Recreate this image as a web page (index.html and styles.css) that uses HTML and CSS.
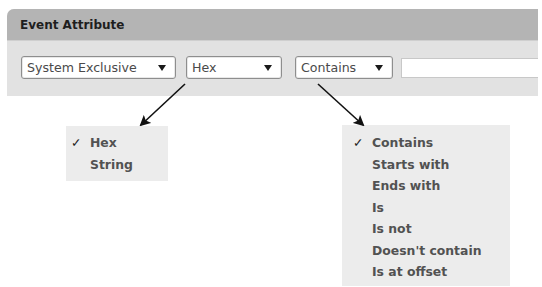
FILE: index.html
```html
<!DOCTYPE html>
<html>
<head>
<meta charset="utf-8">
<link rel="stylesheet" href="styles.css">
</head>
<body>
<div class="page">
  <div class="panel">
    <div class="panel-head">Event Attribute</div>
    <div class="panel-body">
      <div class="select sel-type"><span>System Exclusive</span><span class="tri"></span></div>
      <div class="select sel-format"><span>Hex</span><span class="tri"></span></div>
      <div class="select sel-op"><span>Contains</span><span class="tri"></span></div>
      <div class="field"></div>
    </div>
  </div>
  <div class="menus">
    <ul class="menu menu-format">
      <li class="checked">Hex</li>
      <li>String</li>
    </ul>
    <ul class="menu menu-op">
      <li class="checked">Contains</li>
      <li>Starts with</li>
      <li>Ends with</li>
      <li>Is</li>
      <li>Is not</li>
      <li>Doesn't contain</li>
      <li>Is at offset</li>
    </ul>
  </div>
  <svg class="arrows" width="542" height="287" viewBox="0 0 542 287">
    <defs>
      <marker id="ah" markerWidth="11" markerHeight="11" refX="9" refY="5.5" orient="auto" markerUnits="userSpaceOnUse">
        <path d="M0,0 L11,5.5 L0,11 L2.5,5.5 Z" fill="#111"/>
      </marker>
    </defs>
    <line x1="185" y1="84" x2="141" y2="125" stroke="#111" stroke-width="1.6" marker-end="url(#ah)"/>
    <line x1="318" y1="84" x2="363" y2="125" stroke="#111" stroke-width="1.6" marker-end="url(#ah)"/>
  </svg>
</div>
</body>
</html>
```
FILE: styles.css
```css
html, body {
  margin: 0;
  padding: 0;
  background: #ffffff;
}
.page {
  position: relative;
  width: 542px;
  height: 287px;
  overflow: hidden;
  font-family: "DejaVu Sans", "Liberation Sans", sans-serif;
  color: #3a3a3a;
}
.panel {
  margin: 9px 0 0 7px;
  width: 531px;
  border-top-left-radius: 7px;
  overflow: hidden;
  background: #e2e2e2;
}
.panel-head {
  height: 32px;
  box-sizing: border-box;
  padding: 9px 0 0 13px;
  background: #b4b4b4;
  font-size: 12px;
  font-weight: bold;
  color: #1e1e1e;
  border-bottom: 1px solid #cfcfcf;
}
.panel-body {
  height: 55px;
  box-sizing: border-box;
  padding: 15px 0 0 14px;
  display: flex;
  align-items: flex-start;
}
.select {
  height: 23px;
  box-sizing: border-box;
  border: 1px solid #8e8e8e;
  border-radius: 3px;
  background: #ffffff;
  display: flex;
  align-items: center;
  justify-content: space-between;
  padding: 0 9px 0 5px;
  font-size: 12.6px;
  color: #4a4a4a;
  box-shadow: inset 0 0 0 1px #e8e8e8;
}
.tri {
  width: 0;
  height: 0;
  border-left: 4.5px solid transparent;
  border-right: 4.5px solid transparent;
  border-top: 6px solid #1a1a1a;
}
.sel-type { width: 155px; }
.sel-format { width: 96px; margin-left: 10px; }
.sel-op { width: 98px; margin-left: 13px; }
.field {
  flex: 1;
  height: 18px;
  margin: 2px 0 0 8px;
  background: #ffffff;
  border: 1px solid #c8c8c8;
  border-right: none;
}
.menus {
  display: flex;
  align-items: flex-start;
  padding: 29px 0 0 66px;
}
.menu {
  list-style: none;
  margin: 0;
  background: #ececec;
  font-size: 12.4px;
  font-weight: bold;
  color: #525252;
}
.menu li {
  height: 21.5px;
  line-height: 21.5px;
  position: relative;
}
.menu li.checked::before {
  content: "\2713";
  position: absolute;
  left: -19px;
  top: 0;
  font-weight: bold;
  color: #222;
}
.menu-format {
  width: 78px;
  padding: 6px 0 6px 24px;
  margin-top: 1px;
}
.menu-op {
  width: 138px;
  padding: 7px 0 3px 30px;
  margin-left: 174px;
}
.arrows {
  position: absolute;
  left: 0;
  top: 0;
  pointer-events: none;
}
```
